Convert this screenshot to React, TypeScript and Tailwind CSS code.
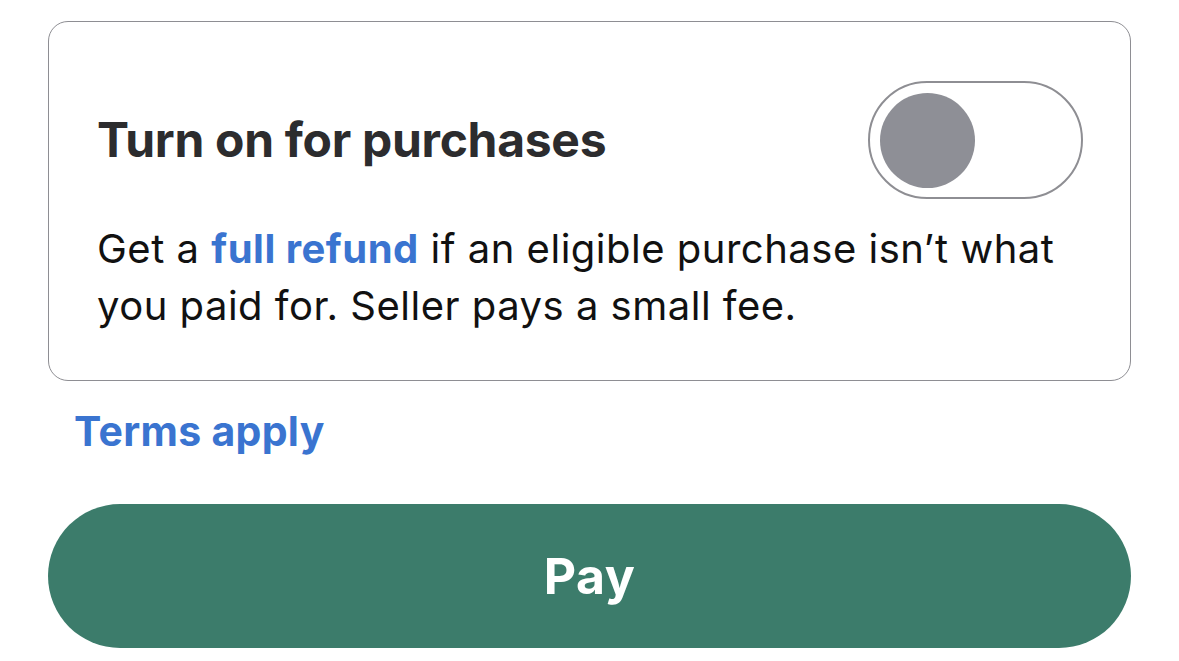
import React, { useState } from "react";

export default function App() {
  const [enabled, setEnabled] = useState(false);

  return (
    <div
      className="min-h-screen bg-white pl-[48px] pt-[21px]"
      style={{ fontFamily: "Inter, 'Liberation Sans', sans-serif" }}
    >
      <div className="w-[1083px]">
        <div className="rounded-[20px] border border-[#8e8e93] pl-[48px] pr-[47px] pt-[59px] pb-[46px]">
          <div className="flex items-center justify-between">
            <h2 className="text-[48px] font-bold leading-[56px] text-[#2c2c2e] tracking-[-0.3px]">
              Turn on for purchases
            </h2>
            <button
              type="button"
              onClick={() => setEnabled(!enabled)}
              className={
                "flex h-[118px] w-[215px] items-center rounded-full border-2 px-[10px] " +
                (enabled
                  ? "justify-end border-[#3c7c6b] bg-[#3c7c6b]"
                  : "justify-start border-[#8e8e93] bg-white")
              }
            >
              <span
                className={
                  "block h-[95px] w-[95px] rounded-full " +
                  (enabled ? "bg-white" : "bg-[#8e8f96]")
                }
              />
            </button>
          </div>
          <p className="mt-[21px] text-[40px] leading-[57px] tracking-[0.5px] text-[#111111]">
            Get a{" "}
            <a href="#" className="font-bold text-[#3a74d0]">
              full refund
            </a>{" "}
            if an eligible purchase isn’t what you paid for. Seller pays a small fee.
          </p>
        </div>

        <div className="mt-[26px] pl-[26px]">
          <a
            href="#"
            className="text-[41px] font-bold leading-[48px] tracking-[0.3px] text-[#3a74d0]"
          >
            Terms apply
          </a>
        </div>

        <button
          type="button"
          className="mt-[49px] flex h-[144px] w-full items-center justify-center rounded-full bg-[#3c7c6b] text-[50px] font-bold tracking-[0.5px] text-white"
        >
          Pay
        </button>
      </div>
    </div>
  );
}
